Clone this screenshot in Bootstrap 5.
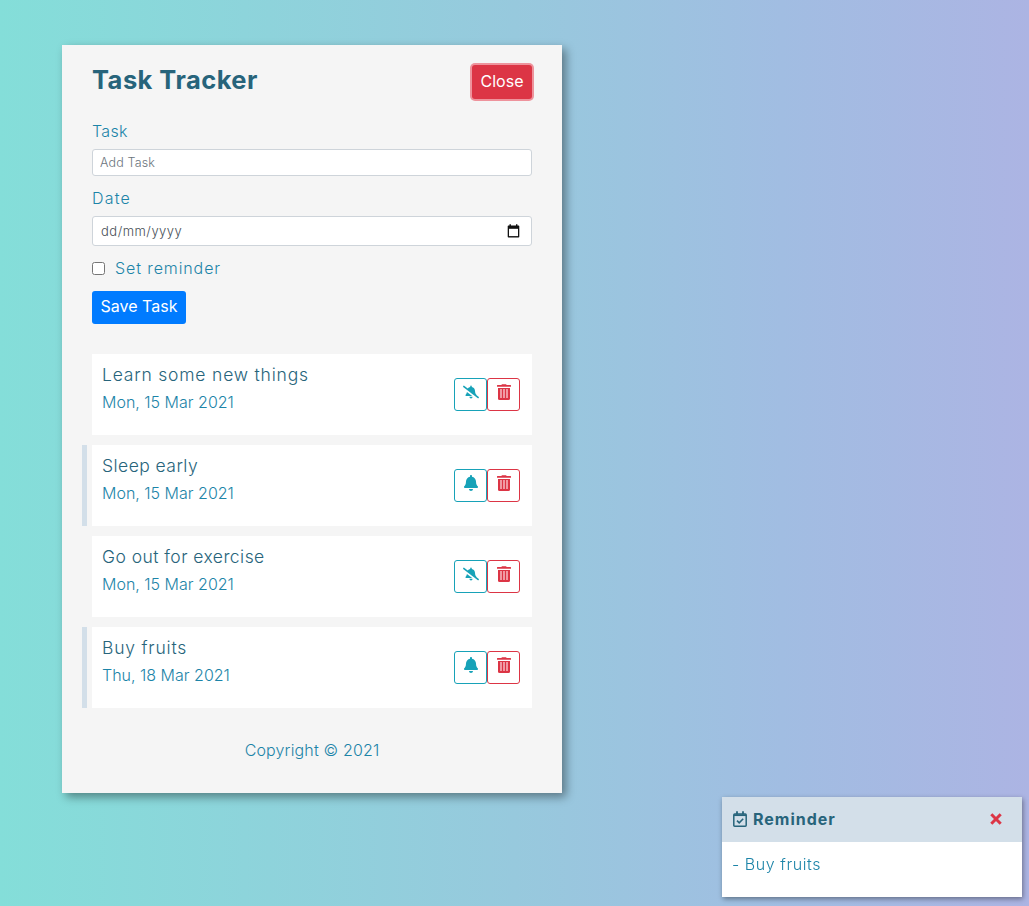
<!DOCTYPE html>
<html lang="en">
<head>
<meta charset="utf-8">
<meta name="viewport" content="width=device-width, initial-scale=1">
<title>Task Tracker</title>
<link href="https://cdn.jsdelivr.net/npm/bootstrap@5.3.0/dist/css/bootstrap.min.css" rel="stylesheet">
<style>
body{min-height:906px;background:linear-gradient(to right,#84ded9 0%,#97c9dd 50%,#a1bde2 76%,#acb4e3 100%);font-family:Inter,"Open Sans",sans-serif;font-weight:300;font-size:16px;line-height:24px;color:#1c84a8;overflow:hidden}
.tracker{width:500px;height:748px;margin:45px 0 0 62px;padding:19px 30px 0;background:#f5f5f5;box-shadow:4px 4px 9px rgba(0,0,0,.4)}
.tracker-head{height:55px}
.title{font-size:25.5px;font-weight:700;color:#27647b;line-height:32px;letter-spacing:.46px}
.btn{border-radius:3px;font-weight:400;line-height:24px;white-space:nowrap}
.btn-close-form,.btn-close-form:hover{background:#dc3545;color:#fff;padding:4px 0 6px;margin-top:1px;height:34px;width:60px;box-shadow:0 0 0 2px #ee939c;border:0}
.btn-save,.btn-save:hover{background:#007bff;color:#fff;width:94px;height:33px;padding:3px 0 6px;border:0;margin-bottom:30px}
.field{border:1px solid #ced4da;border-radius:3px;background:#fff;padding:0 7px 1px;width:100%;height:27px;font-size:12.5px;font-weight:300;letter-spacing:.15px;color:#6c757d;margin:6px 0 10px;display:block}
.field::placeholder{color:#6c757d;opacity:1}
.field-date{height:30px;font-size:13px;letter-spacing:.5px;color:#495057;padding:0 11px 0 8px}
.check{width:13px;height:13px;margin:0 10px 0 0}
.check-row{margin-bottom:11px}
.ls-task{letter-spacing:.3px}.ls-date{letter-spacing:1.2px}.ls-set{letter-spacing:.9px}
.task-item{height:81px;background:#fff;margin-bottom:10px;padding:9px 12px 0 10px}
.strip{left:-10px;top:0;width:5px;height:81px;background:#d3dfe9}
.task-name{font-size:17.5px;color:#27647b;margin-bottom:3px;letter-spacing:.45px}
.name-wide{letter-spacing:.8px}
.task-date{letter-spacing:0}
.acts{margin-top:15px}
.act{width:33px;height:33px;padding:5px 0 0;border:1px solid;background:#fff;border-radius:3px;display:flex;justify-content:center}
.act svg{width:16px;height:16px;fill:currentColor}
.act-info{color:#17a2b8}.act-del{color:#dc3545}
.foot{margin-top:30px;letter-spacing:.15px}
.reminder{left:722px;top:797px;width:300px;height:100px;background:#fff;box-shadow:1px 2px 5px rgba(0,0,0,.4)}
.reminder-head{height:45px;background:#d3dfe9;padding:0 20px 1px 11px;color:#27647b;font-weight:700;letter-spacing:1px}
.reminder-label{margin-left:6px}
.reminder-body{padding:10px;letter-spacing:.56px}
</style>
</head>
<body>
<svg class="d-none">
  <symbol id="bell" viewBox="0 0 448 512"><path d="M224 512c35.32 0 63.97-28.65 63.97-64H160.03c0 35.35 28.65 64 63.97 64zm215.39-149.71c-19.32-20.76-55.47-51.99-55.47-154.29 0-77.7-54.48-139.9-127.94-155.16V32c0-17.67-14.32-32-31.98-32s-31.98 14.33-31.98 32v20.84C118.56 68.1 64.08 130.3 64.08 208c0 102.3-36.15 133.53-55.47 154.29-6 6.45-8.66 14.16-8.61 21.71.11 16.4 12.98 32 32.1 32h383.8c19.12 0 32-15.6 32.1-32 .05-7.55-2.61-15.27-8.61-21.71z"/></symbol>
  <symbol id="bell-slash" viewBox="0 0 640 512"><path d="M633.82 458.1l-90.62-70.05c.19-1.38.8-2.66.8-4.06.05-7.55-2.61-15.26-8.61-21.71-19.32-20.76-55.47-51.99-55.47-154.29 0-77.7-54.48-139.9-127.94-155.16V32c0-17.67-14.32-32-31.98-32s-31.98 14.33-31.98 32v20.84c-40.33 8.38-74.66 31.07-97.59 62.57L45.47 3.37C38.49-2.05 28.43-.8 23.01 6.18L3.37 31.45C-2.05 38.42-.8 48.47 6.18 53.9l588.35 454.73c6.98 5.43 17.03 4.17 22.46-2.81l19.64-25.27c5.42-6.97 4.17-17.02-2.81-22.45zM157.23 251.54c-8.61 67.96-36.41 93.33-52.62 110.75-6 6.45-8.66 14.16-8.61 21.71.11 16.4 12.98 32 32.1 32h241.12L157.23 251.54zM320 512c35.32 0 63.97-28.65 63.97-64H256.03c0 35.35 28.65 64 63.97 64z"/></symbol>
  <symbol id="trash" viewBox="0 0 14 16"><path d="M.5 1h3.900l.5-.8h4.200l.5.8h3.900q.5 0 .5.500v1.200H0V1.500Q0 1 .5 1z"/><path d="M1 4h12v10.500q0 1.500-1.500 1.500h-9Q1 16 1 14.500z"/><path d="M3 5h2v9H3zM6 5h2v9H6zM9 5h2v9H9z" fill="#f09aa3"/></symbol>
</svg>
<main class="tracker">
  <header class="tracker-head d-flex justify-content-between align-items-start">
    <h1 class="title mb-0">Task Tracker</h1>
    <button class="btn btn-close-form">Close</button>
  </header>
  <form>
    <label class="d-block ls-task" for="task">Task</label>
    <input class="field" id="task" placeholder="Add Task">
    <label class="d-block ls-date">Date</label>
    <div class="field field-date d-flex align-items-center justify-content-between">
      <span>dd/mm/yyyy</span>
      <svg width="13" height="14" viewBox="0 0 13 14"><path d="M1.500 1.500h10q.8 0 .8.800v10.400q0 .8-.8.800h-10q-.8 0-.8-.800V2.300q0-.8.800-.8zM2.500 .3h1.400v2H2.500zM9 .3h1.400v2H9z" fill="#111"/><path d="M2 4.800h9v7.300H2z" fill="#fff"/></svg>
    </div>
    <div class="check-row d-flex align-items-center">
      <input class="check" id="rem" type="checkbox"><label class="ls-set" for="rem">Set reminder</label>
    </div>
    <button type="button" class="btn btn-save d-block">Save Task</button>
  </form>
  <section>
    <div class="task-item d-flex justify-content-between">
      <div><div class="task-name name-wide">Learn some new things</div><div class="task-date">Mon, 15 Mar 2021</div></div>
      <div class="acts d-flex"><button class="act act-info"><svg><use href="#bell-slash"/></svg></button><button class="act act-del"><svg><use href="#trash"/></svg></button></div>
    </div>
    <div class="task-item d-flex justify-content-between position-relative">
      <span class="strip position-absolute"></span>
      <div><div class="task-name">Sleep early</div><div class="task-date">Mon, 15 Mar 2021</div></div>
      <div class="acts d-flex"><button class="act act-info"><svg><use href="#bell"/></svg></button><button class="act act-del"><svg><use href="#trash"/></svg></button></div>
    </div>
    <div class="task-item d-flex justify-content-between">
      <div><div class="task-name">Go out for exercise</div><div class="task-date">Mon, 15 Mar 2021</div></div>
      <div class="acts d-flex"><button class="act act-info"><svg><use href="#bell-slash"/></svg></button><button class="act act-del"><svg><use href="#trash"/></svg></button></div>
    </div>
    <div class="task-item d-flex justify-content-between position-relative">
      <span class="strip position-absolute"></span>
      <div><div class="task-name name-wide">Buy fruits</div><div class="task-date">Thu, 18 Mar 2021</div></div>
      <div class="acts d-flex"><button class="act act-info"><svg><use href="#bell"/></svg></button><button class="act act-del"><svg><use href="#trash"/></svg></button></div>
    </div>
  </section>
  <footer class="foot text-center">Copyright © 2021</footer>
</main>
<aside class="reminder position-fixed">
  <div class="reminder-head d-flex align-items-center">
    <svg width="14" height="16" viewBox="0 0 14 16" fill="none" stroke="currentColor"><path d="M1.700 3h10.600q.9 0 .9.900v10.400q0 .9-.9.900H1.700q-.9 0-.9-.9V3.900Q.8 3 1.700 3z" stroke-width="1.500"/><path d="M4 .2v3M10 .2v3" stroke-width="1.800"/><path d="M1 4.200h12" stroke-width="1.700"/><path d="M4 9.600l2.200 2.200 4-4.100" stroke-width="1.600"/></svg>
    <span class="reminder-label">Reminder</span>
    <svg class="ms-auto" width="12" height="12" viewBox="0 0 12 12" stroke="#dc3545" stroke-width="3"><path d="M1.300 1.300l9.400 9.400M10.700 1.300l-9.400 9.400"/></svg>
  </div>
  <div class="reminder-body">- Buy fruits</div>
</aside>
<script src="https://cdn.jsdelivr.net/npm/bootstrap@5.3.0/dist/js/bootstrap.bundle.min.js"></script>
</body>
</html>
